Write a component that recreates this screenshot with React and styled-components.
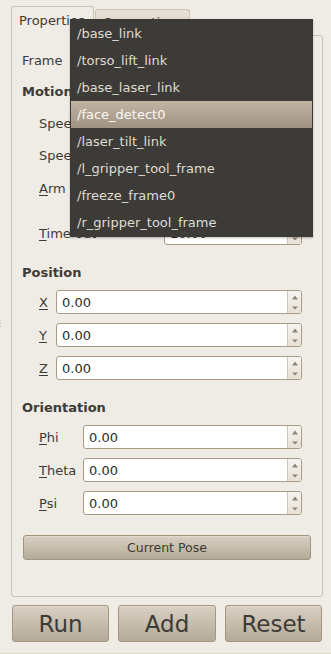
import React from "react";
import styled, { createGlobalStyle, css } from "styled-components";

const Global = createGlobalStyle`
  html, body { margin: 0; padding: 0; }
  body {
    background: #efebe5;
    font-family: "DejaVu Sans", "Liberation Sans", sans-serif;
    font-size: 13px;
    color: #3c3b37;
  }
`;

const Window = styled.div`
  position: relative;
  width: 331px;
  height: 654px;
  box-sizing: border-box;
  background: #efebe5;
  border-bottom: 1px solid #e2dbd0;
  overflow: hidden;
`;

const Main = styled.div`
  padding: 6px 8px 0 11px;
  display: flex;
  flex-direction: column;
`;

const TabBar = styled.div`
  display: flex;
  align-items: flex-end;
  height: 29px;
  position: relative;
  z-index: 1;
`;

const Tab = styled.div`
  box-sizing: border-box;
  border: 1px solid #cbc1b2;
  border-bottom: none;
  border-radius: 3px 3px 0 0;
  padding: 0 8px 0 7px;
  display: flex;
  align-items: center;
  ${(p) =>
    p.$active
      ? css`
          height: 30px;
          margin-bottom: -1px;
          background: #efebe5;
          padding-bottom: 2px;
        `
      : css`
          height: 26px;
          margin-left: 1px;
          background: linear-gradient(#e6e0d6, #dbd4c8);
          color: #4a4843;
          padding-left: 7px;
          width: 95px;
        `}
`;

const Pane = styled.div`
  box-sizing: border-box;
  height: 562px;
  border: 1px solid #cbc1b2;
  border-radius: 0 3px 3px 3px;
  padding: 11px 10px 0 10px;
  display: flex;
  flex-direction: column;
`;

const Row = styled.div`
  display: grid;
  grid-template-columns: ${(p) => p.$label}px 1fr;
  align-items: center;
  height: ${(p) => p.$h || 24}px;
  margin-top: ${(p) => p.$mt || 0}px;
  padding-left: ${(p) => p.$indent || 0}px;
  padding-right: ${(p) => p.$pr || 10}px;
`;

const Label = styled.span`
  white-space: nowrap;
  color: #3c3b37;
  u { text-decoration: underline; text-underline-offset: 2px; }
`;

const Heading = styled.div`
  font-weight: bold;
  height: 16px;
  line-height: 16px;
  margin-top: ${(p) => p.$mt || 0}px;
  color: #3c3b37;
`;

const Field = styled.div`
  box-sizing: border-box;
  height: ${(p) => p.$h || 24}px;
  background: #fff;
  border: 1px solid #a99b84;
  border-radius: 3px;
  display: flex;
  align-items: stretch;
  overflow: hidden;
`;

const FieldText = styled.span`
  flex: 1;
  display: flex;
  align-items: center;
  padding-left: 5px;
  color: #2e2d2a;
`;

const Spin = styled.div`
  width: 14px;
  border-left: 1px solid #cfc6b7;
  background: linear-gradient(#f7f5f1, #e6e0d6);
  display: flex;
  flex-direction: column;
  align-items: center;
  justify-content: space-between;
  padding: 4px 0 3px;
  box-sizing: border-box;
`;

const Arrow = ({ down }) => (
  <svg width="6" height="5" viewBox="0 0 6 5">
    {down ? (
      <path d="M0 1.5 H6 L3 4.5 Z" fill="#8d8473" />
    ) : (
      <path d="M3 0.5 L6 4.5 H0 Z" fill="#8d8473" />
    )}
  </svg>
);

const SpinBox = ({ value, h }) => (
  <Field $h={h}>
    <FieldText>{value}</FieldText>
    <Spin>
      <Arrow />
      <Arrow down />
    </Spin>
  </Field>
);

const buttonBase = css`
  box-sizing: border-box;
  border: 1px solid #a3957f;
  border-radius: 3px;
  background: linear-gradient(#d8d0c3, #b5aa98);
  color: #3c3b37;
  font-family: inherit;
  display: flex;
  align-items: center;
  justify-content: center;
  box-shadow: inset 0 1px 0 rgba(255, 255, 255, 0.25);
`;

const PoseButton = styled.div`
  ${buttonBase};
  height: 25px;
  margin: 20px 1px 0 1px;
  font-size: 12.5px;
`;

const ButtonBar = styled.div`
  display: grid;
  grid-template-columns: 97px 98px 97px;
  column-gap: 9px;
  padding: 8px 1px 0 1px;
`;

const BigButton = styled.div`
  ${buttonBase};
  height: 37px;
  font-size: 23px;
`;

const Menu = styled.div`
  position: absolute;
  left: 70px;
  top: 19px;
  width: 243px;
  box-sizing: border-box;
  background: #3c3b37;
  padding: 1px 1px;
  z-index: 5;
  box-shadow: 0 1px 2px rgba(0, 0, 0, 0.25);
`;

const MenuItem = styled.div`
  height: 27px;
  line-height: 27px;
  padding-left: 6px;
  color: ${(p) => (p.$hl ? "#fbf9f5" : "#dfdbd2")};
  background: ${(p) =>
    p.$hl ? "linear-gradient(#c1b4a3, #a09282)" : "transparent"};
`;

const Grip = styled.div`
  position: absolute;
  left: 0;
  top: 320px;
  display: flex;
  flex-direction: column;
  gap: 2px;
  span {
    width: 1px;
    height: 1px;
    background: #c8bfb1;
  }
`;

const frames = [
  "/base_link",
  "/torso_lift_link",
  "/base_laser_link",
  "/face_detect0",
  "/laser_tilt_link",
  "/l_gripper_tool_frame",
  "/freeze_frame0",
  "/r_gripper_tool_frame",
];

export default function App() {
  return (
    <>
      <Global />
      <Window>
        <Grip>
          <span />
          <span />
          <span />
        </Grip>
        <Main>
          <TabBar>
            <Tab $active>Properties</Tab>
            <Tab>Connections</Tab>
          </TabBar>
          <Pane>
            <Row $label={48} $h={26}>
              <Label>Frame</Label>
              <Field $h={26}>
                <FieldText>/base_link</FieldText>
              </Field>
            </Row>
            <Heading $mt={11}>Motion</Heading>
            <Row $label={125} $indent={17} $h={26} $mt={10}>
              <Label>Speed</Label>
              <SpinBox value="0.10" h={26} />
            </Row>
            <Row $label={125} $indent={17} $h={26} $mt={6}>
              <Label>Speed</Label>
              <SpinBox value="0.10" h={26} />
            </Row>
            <Row $label={125} $indent={17} $h={26} $mt={7}>
              <Label>
                <u>A</u>rm
              </Label>
              <Field $h={26}>
                <FieldText>Left</FieldText>
              </Field>
            </Row>
            <Row $label={125} $indent={17} $h={24} $mt={20}>
              <Label>
                <u>T</u>ime out
              </Label>
              <SpinBox value="10.00" />
            </Row>
            <Heading $mt={20}>Position</Heading>
            <Row $label={17} $indent={17} $mt={9}>
              <Label>
                <u>X</u>
              </Label>
              <SpinBox value="0.00" />
            </Row>
            <Row $label={17} $indent={17} $mt={9}>
              <Label>
                <u>Y</u>
              </Label>
              <SpinBox value="0.00" />
            </Row>
            <Row $label={17} $indent={17} $mt={9}>
              <Label>
                <u>Z</u>
              </Label>
              <SpinBox value="0.00" />
            </Row>
            <Heading $mt={20}>Orientation</Heading>
            <Row $label={44} $indent={17} $mt={9}>
              <Label>
                <u>P</u>hi
              </Label>
              <SpinBox value="0.00" />
            </Row>
            <Row $label={44} $indent={17} $mt={9}>
              <Label>
                <u>T</u>heta
              </Label>
              <SpinBox value="0.00" />
            </Row>
            <Row $label={44} $indent={17} $mt={9}>
              <Label>
                <u>P</u>si
              </Label>
              <SpinBox value="0.00" />
            </Row>
            <PoseButton>Current Pose</PoseButton>
          </Pane>
          <ButtonBar>
            <BigButton>Run</BigButton>
            <BigButton>Add</BigButton>
            <BigButton>Reset</BigButton>
          </ButtonBar>
        </Main>
        <Menu>
          {frames.map((f) => (
            <MenuItem key={f} $hl={f === "/face_detect0"}>
              {f}
            </MenuItem>
          ))}
        </Menu>
      </Window>
    </>
  );
}
